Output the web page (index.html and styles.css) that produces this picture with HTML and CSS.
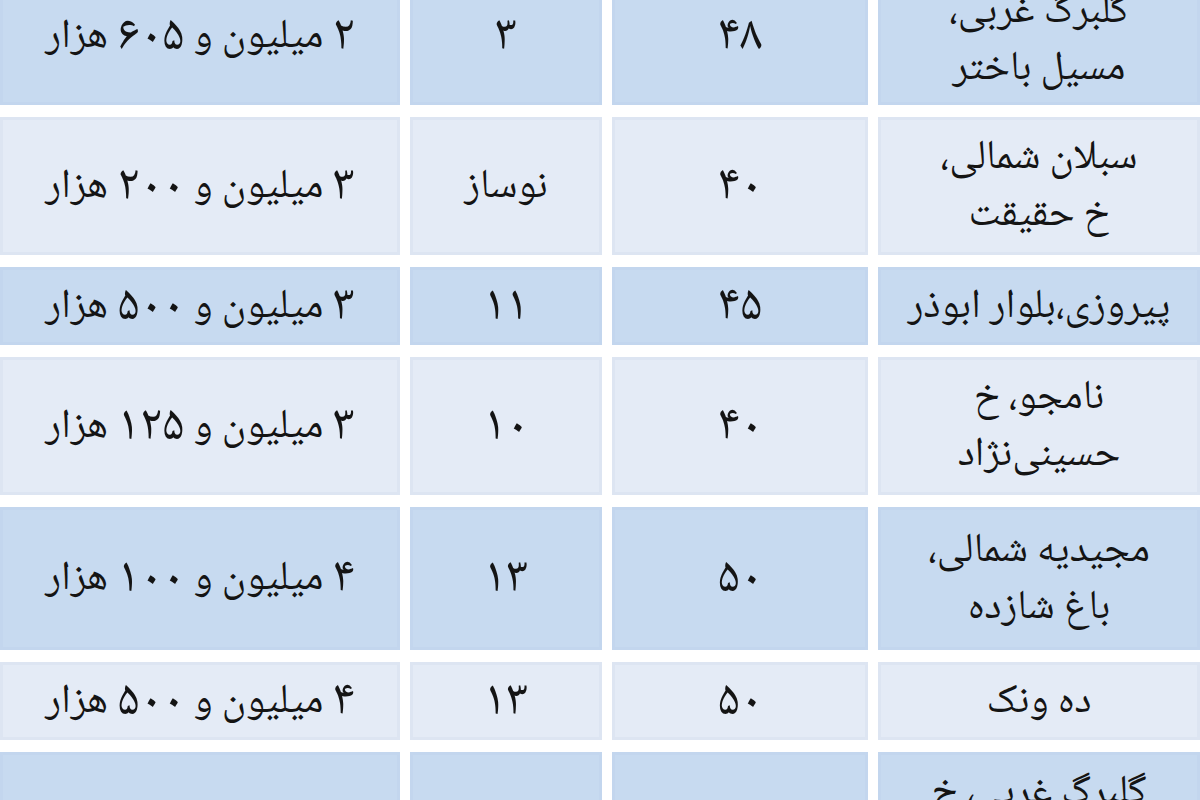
FILE: index.html
```html
<!DOCTYPE html>
<html lang="fa" dir="rtl">
<head>
<meta charset="utf-8">
<title>جدول قیمت</title>
<link rel="stylesheet" href="styles.css">
</head>
<body>
<div class="frame">
  <div class="table">
    <div class="row dark tall first">
      <div class="cell loc">گلبرگ غربی،<br>مسیل باختر</div>
      <div class="cell"><span class="num">۴۸</span></div>
      <div class="cell"><span class="num">۳</span></div>
      <div class="cell"><span class="num">۲</span>&nbsp;میلیون و&nbsp;<span class="num">۶۰۵</span>&nbsp;هزار</div>
    </div>
    <div class="row light tall">
      <div class="cell loc">سبلان شمالی،<br>خ حقیقت</div>
      <div class="cell"><span class="num">۴۰</span></div>
      <div class="cell">نوساز</div>
      <div class="cell"><span class="num">۳</span>&nbsp;میلیون و&nbsp;<span class="num">۲۰۰</span>&nbsp;هزار</div>
    </div>
    <div class="row dark short">
      <div class="cell loc">پیروزی،بلوار ابوذر</div>
      <div class="cell"><span class="num">۴۵</span></div>
      <div class="cell"><span class="num">۱۱</span></div>
      <div class="cell"><span class="num">۳</span>&nbsp;میلیون و&nbsp;<span class="num">۵۰۰</span>&nbsp;هزار</div>
    </div>
    <div class="row light tall">
      <div class="cell loc">نامجو، خ<br>حسینی‌نژاد</div>
      <div class="cell"><span class="num">۴۰</span></div>
      <div class="cell"><span class="num">۱۰</span></div>
      <div class="cell"><span class="num">۳</span>&nbsp;میلیون و&nbsp;<span class="num">۱۲۵</span>&nbsp;هزار</div>
    </div>
    <div class="row dark taller">
      <div class="cell loc">مجیدیه شمالی،<br>باغ شازده</div>
      <div class="cell"><span class="num">۵۰</span></div>
      <div class="cell"><span class="num">۱۳</span></div>
      <div class="cell"><span class="num">۴</span>&nbsp;میلیون و&nbsp;<span class="num">۱۰۰</span>&nbsp;هزار</div>
    </div>
    <div class="row light short">
      <div class="cell loc">ده ونک</div>
      <div class="cell"><span class="num">۵۰</span></div>
      <div class="cell"><span class="num">۱۳</span></div>
      <div class="cell"><span class="num">۴</span>&nbsp;میلیون و&nbsp;<span class="num">۵۰۰</span>&nbsp;هزار</div>
    </div>
    <div class="row dark tall">
      <div class="cell loc">گلبرگ غربی، خ<br>ژاله</div>
      <div class="cell"><span class="num">۵۵</span></div>
      <div class="cell"><span class="num">۱۵</span></div>
      <div class="cell"><span class="num">۴</span>&nbsp;میلیون و&nbsp;<span class="num">۷۰۰</span>&nbsp;هزار</div>
    </div>
  </div>
</div>
</body>
</html>
```

FILE: styles.css
```css
html, body {
  margin: 0;
  padding: 0;
  background: #ffffff;
}

.frame {
  width: 1200px;
  height: 800px;
  overflow: hidden;
  background: #ffffff;
}

.table {
  direction: rtl;
  display: flex;
  flex-direction: column;
  gap: 12px;
  margin-top: -33px;
  font-family: "Noto Naskh Arabic", "Noto Sans Arabic", "DejaVu Sans", sans-serif;
  font-size: 41px;
  color: #141414;
}

.row {
  display: grid;
  grid-template-columns: 322px 256px 192px 400px;
  column-gap: 10px;
}

.row.tall { height: 138px; }
.row.taller { height: 143px; }
.row.short { height: 78px; }

.cell {
  display: flex;
  align-items: center;
  justify-content: center;
  text-align: center;
  line-height: 57px;
  white-space: nowrap;
  padding-top: 4px;
  box-sizing: border-box;
}

.first .loc {
  padding-top: 12px;
}

.loc {
  white-space: normal;
  padding-left: 8px;
  padding-right: 8px;
}

.num {
  font-size: 50px;
  line-height: 57px;
}

.dark .cell {
  background: #c7daf0;
  box-shadow: inset 0 0 0 3px #c3d6ee;
}

.light .cell {
  background: #e4ebf6;
  box-shadow: inset 0 0 0 3px #dde5f2;
}
```
